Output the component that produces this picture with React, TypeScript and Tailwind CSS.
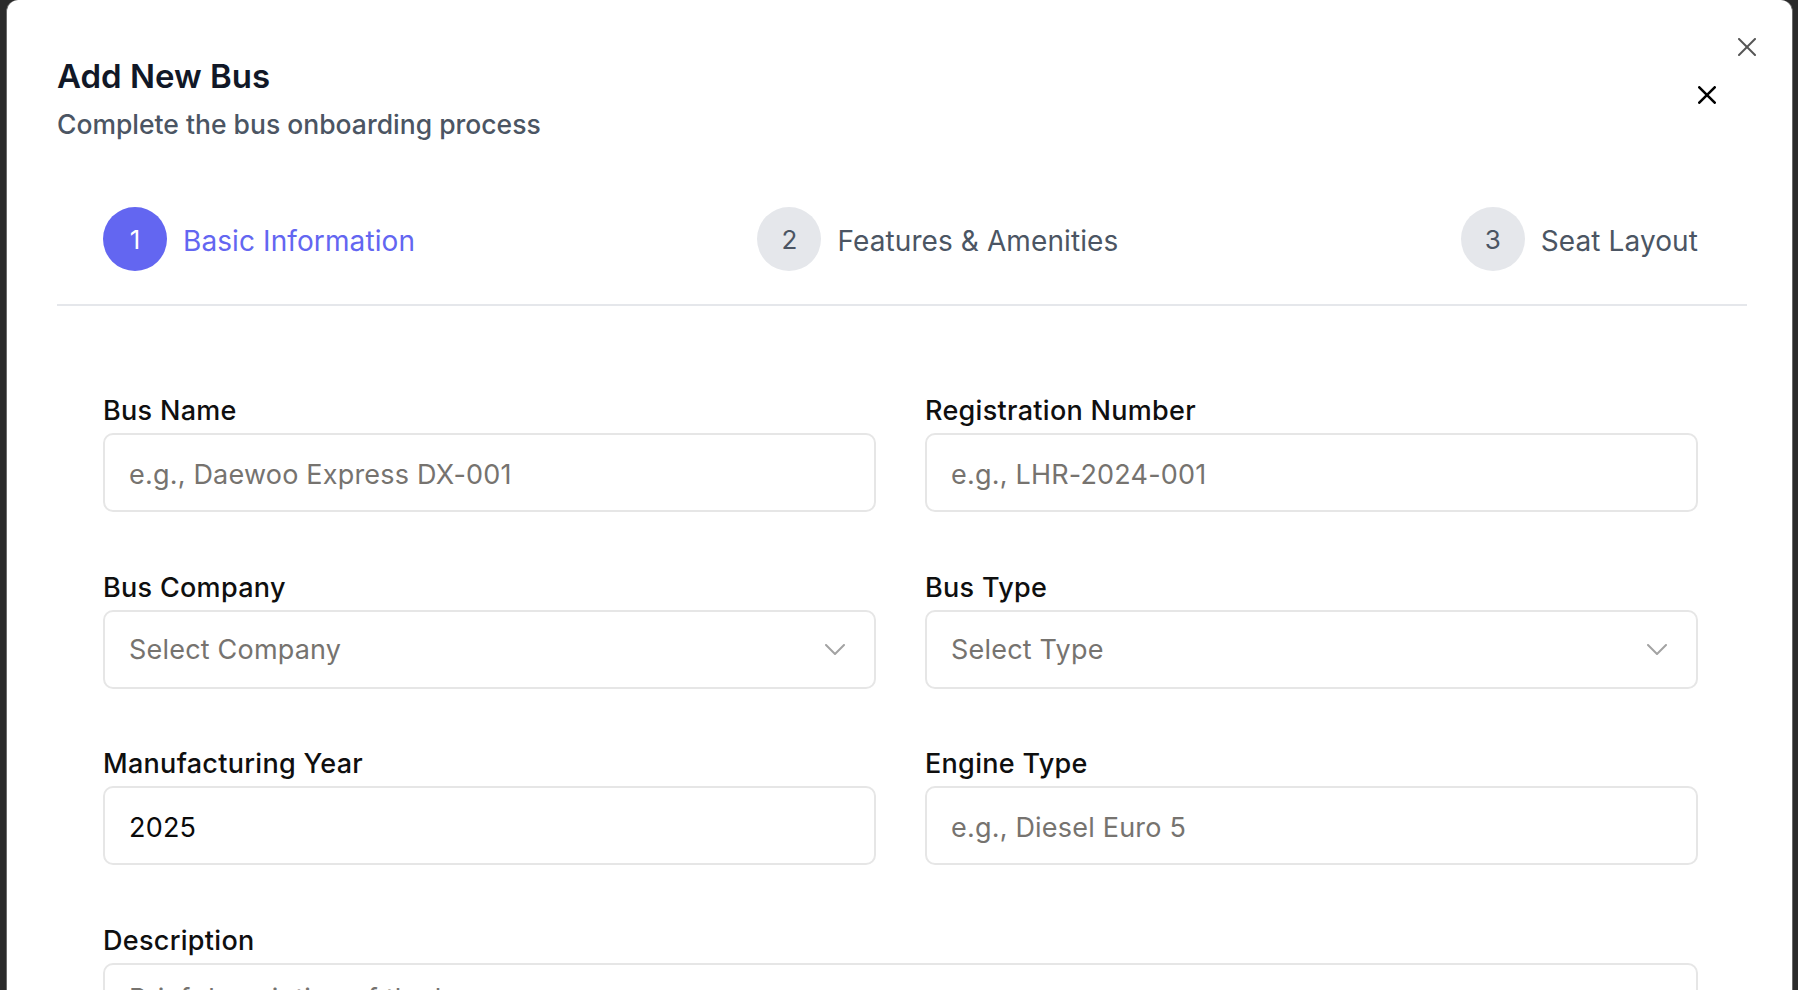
import React from "react";

const font = { fontFamily: 'Inter, "Noto Sans", "Liberation Sans", sans-serif' };

function XIcon({ color, width }: { color: string; width: number }) {
  const h = width / 2;
  return (
    <svg width="18" height="18" viewBox="0 0 18 18" fill="none">
      <line x1={h} y1={h} x2={18 - h} y2={18 - h} stroke={color} strokeWidth={width} strokeLinecap="round" />
      <line x1={18 - h} y1={h} x2={h} y2={18 - h} stroke={color} strokeWidth={width} strokeLinecap="round" />
    </svg>
  );
}

function Chevron() {
  return (
    <svg width="20" height="11" viewBox="0 0 20 11" fill="none">
      <polyline points="1,1 10,10 19,1" stroke="#a3a3a3" strokeWidth="2" strokeLinecap="round" strokeLinejoin="round" />
    </svg>
  );
}

function Step({ n, label, active }: { n: number; label: string; active?: boolean }) {
  return (
    <div className="flex items-center gap-[16px]">
      <div
        className={
          active
            ? "w-[64px] h-[64px] rounded-full bg-[#6366f1] text-white flex items-center justify-center text-[26px]"
            : "w-[64px] h-[64px] rounded-full bg-[#e5e7eb] text-[#4b5563] flex items-center justify-center text-[26px]"
        }
      >
        {n}
      </div>
      <span
        className={
          active
            ? "pt-[4px] text-[28px] tracking-[0.1px] text-[#6366f1]"
            : "pt-[4px] text-[28px] tracking-[0.1px] text-[#4b5563]"
        }
      >
        {label}
      </span>
    </div>
  );
}

function Field({ label, children, wide }: { label: string; children: React.ReactNode; wide?: boolean }) {
  return (
    <div className={wide ? "col-span-2 flex flex-col" : "flex flex-col"}>
      <label className="text-[27px] leading-[36px] tracking-[0.3px] font-medium text-[#0f0f0f] mb-[4px]">{label}</label>
      {children}
    </div>
  );
}

const inputCls =
  "h-[79px] w-full rounded-[10px] border-2 border-[#e6e6e6] bg-white px-[24px] pt-[3px] text-[27px] tracking-[0.2px] text-[#0a0a0a] placeholder:text-[#76736f] outline-none";

function SelectBox({ placeholder }: { placeholder: string }) {
  return (
    <div className="h-[79px] w-full rounded-[10px] border-2 border-[#e6e6e6] bg-white pl-[24px] pr-[29px] flex items-center justify-between">
      <span className="pt-[3px] text-[27px] tracking-[0.2px] text-[#76736f]">{placeholder}</span>
      <Chevron />
    </div>
  );
}

export default function App() {
  return (
    <div className="w-full h-[990px] bg-[#2b2b2b] overflow-hidden pl-[6px] pr-[5px]" style={font}>
      <div className="relative h-full bg-white rounded-t-[12px] border-x border-[#6b6b6b] overflow-hidden pt-[56px] pl-[50px] pr-[45px]">
        <button className="absolute left-[1731px] top-[38px] w-[18px] h-[18px]">
          <XIcon color="#555555" width={2} />
        </button>
        <button className="absolute left-[1691px] top-[86px] w-[18px] h-[18px]">
          <XIcon color="#000000" width={2.6} />
        </button>

        <h2 className="text-[33px] leading-[40px] font-semibold text-[#111827]">Add New Bus</h2>
        <p className="mt-[10px] text-[26.5px] leading-[36px] font-medium text-[#4b5563]">
          Complete the bus onboarding process
        </p>

        <div className="mt-[65px] h-[64px] flex items-center justify-between pl-[46px] pr-[49px]">
          <Step n={1} label="Basic Information" active />
          <Step n={2} label="Features & Amenities" />
          <Step n={3} label="Seat Layout" />
        </div>
        <div className="mt-[33px] h-[2px] bg-[#e5e7eb]" />

        <div className="mt-[87px] pl-[46px] pr-[49px] grid grid-cols-2 gap-x-[49px] gap-y-[57.5px]">
          <Field label="Bus Name">
            <input className={inputCls} placeholder="e.g., Daewoo Express DX-001" />
          </Field>
          <Field label="Registration Number">
            <input className={inputCls} placeholder="e.g., LHR-2024-001" />
          </Field>
          <Field label="Bus Company">
            <SelectBox placeholder="Select Company" />
          </Field>
          <Field label="Bus Type">
            <SelectBox placeholder="Select Type" />
          </Field>
          <Field label="Manufacturing Year">
            <input className={inputCls} defaultValue="2025" />
          </Field>
          <Field label="Engine Type">
            <input className={inputCls} placeholder="e.g., Diesel Euro 5" />
          </Field>
          <Field label="Description" wide>
            <textarea
              className="h-[160px] w-full resize-none rounded-[10px] border-2 border-[#e6e6e6] bg-white px-[24px] py-[16px] text-[27px] leading-[36px] tracking-[0.2px] text-[#0a0a0a] placeholder:text-[#76736f] outline-none"
              placeholder="Brief description of the bus"
            />
          </Field>
        </div>
      </div>
    </div>
  );
}
